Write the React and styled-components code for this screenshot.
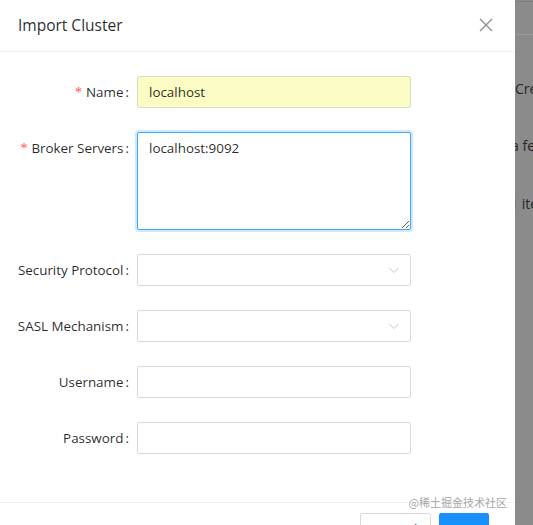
import React from "react";
import styled, { createGlobalStyle } from "styled-components";

const Global = createGlobalStyle`
  html, body { margin: 0; padding: 0; height: 525px; overflow: hidden; background: #fff; }
  body { font-family: "Open Sans", "Noto Sans", "Noto Sans CJK SC", sans-serif; font-size: 13.4px; color: rgba(0,0,0,0.85); }
  * { box-sizing: border-box; }
`;

const Page = styled.div`
  display: flex;
  width: 533px;
  height: 525px;
  overflow: hidden;
`;

const Modal = styled.div`
  position: relative;
  width: 515px;
  flex: none;
  background: #fff;
  display: flex;
  flex-direction: column;
  overflow: hidden;
`;

const Header = styled.div`
  flex: none;
  height: 52px;
  padding: 0 21px 0 18px;
  border-bottom: 1px solid #f0f0f0;
  display: flex;
  align-items: center;
  justify-content: space-between;
`;

const Title = styled.div`
  font-size: 15.5px;
  line-height: 22px;
  margin-top: -2px;
  color: rgba(0,0,0,0.85);
`;

const Close = styled.button`
  border: 0;
  background: none;
  padding: 0;
  width: 16px;
  height: 16px;
  margin-top: -2px;
  display: flex;
  align-items: center;
  justify-content: center;
  color: rgba(0,0,0,0.45);
`;

const Body = styled.div`
  flex: none;
  padding: 24px 0 0;
  height: 450px;
`;

const Row = styled.div`
  display: flex;
  align-items: flex-start;
  margin-bottom: 24px;
`;

const Label = styled.label`
  width: 137px;
  flex: none;
  text-align: right;
  line-height: 32px;
  height: 32px;
  color: rgba(0,0,0,0.85);
  white-space: nowrap;
  &::after {
    content: ":";
    margin: 0 8px 0 2px;
  }
`;

const Star = styled.span`
  color: #ff4d4f;
  font-family: "Liberation Serif", serif;
  font-size: 14px;
  margin-right: 4px;
`;

const Input = styled.input`
  width: 274px;
  height: 32px;
  padding: 4px 11px;
  font: inherit;
  color: rgba(0,0,0,0.85);
  border: 1px solid ${(p) => (p.$autofill ? "#dcdcc4" : "#d9d9d9")};
  background: ${(p) => (p.$autofill ? "#fafcc3" : "#fff")};
  border-radius: 2px;
  outline: none;
`;

const TextArea = styled.textarea`
  width: 274px;
  height: 98px;
  padding: 4px 11px;
  font: inherit;
  line-height: 22px;
  color: rgba(0,0,0,0.85);
  border: 1px solid #40a9ff;
  box-shadow: 0 0 0 2px rgba(24,144,255,0.2);
  border-radius: 2px;
  outline: none;
  resize: vertical;
`;

const Select = styled.div`
  width: 274px;
  height: 32px;
  border: 1px solid #d9d9d9;
  border-radius: 2px;
  background: #fff;
  display: flex;
  align-items: center;
  justify-content: flex-end;
  padding-right: 10px;
  color: #c4c4c4;
`;

const Footer = styled.div`
  flex: none;
  border-top: 1px solid #f0f0f0;
  padding: 10px 26px 10px 16px;
  display: flex;
  justify-content: flex-end;
  gap: 8px;
`;

const Button = styled.button`
  flex: none;
  height: 32px;
  padding: 4px 15px;
  font: inherit;
  border-radius: 2px;
  border: 1px solid ${(p) => (p.$primary ? "#1890ff" : "#d9d9d9")};
  background: ${(p) => (p.$primary ? "#1890ff" : "#fff")};
  color: ${(p) => (p.$primary ? "#fff" : "rgba(0,0,0,0.85)")};
  width: ${(p) => (p.$primary ? "50px" : "71px")};
`;

const Watermark = styled.div`
  position: absolute;
  right: 8px;
  top: 494px;
  font-family: "Noto Sans CJK SC", sans-serif;
  font-size: 11px;
  line-height: 16px;
  color: #a8a8a8;
  pointer-events: none;
`;

const Backdrop = styled.div`
  flex: 1;
  background: #8b8b8b;
  overflow: hidden;
  display: flex;
  flex-direction: column;
`;

const Line = styled.div`
  height: 1px;
  background: ${(p) => p.$c};
  margin-top: ${(p) => p.$top}px;
`;

const Peek = styled.div`
  white-space: nowrap;
  font-size: 14px;
  line-height: 22px;
  color: #262626;
  margin-top: ${(p) => p.$top}px;
  margin-left: ${(p) => p.$left}px;
`;

const Chevron = () => (
  <svg width="12" height="12" viewBox="0 0 12 12" fill="none">
    <path d="M1.5 4 L6 8.5 L10.5 4" stroke="currentColor" strokeWidth="1" />
  </svg>
);

const XIcon = () => (
  <svg width="14" height="14" viewBox="0 0 14 14" fill="none">
    <path d="M1 1 L13 13 M13 1 L1 13" stroke="currentColor" strokeWidth="1.3" />
  </svg>
);

export default function App() {
  return (
    <>
      <Global />
      <Page>
        <Modal>
          <Header>
            <Title>Import Cluster</Title>
            <Close aria-label="close"><XIcon /></Close>
          </Header>
          <Body>
            <Row>
              <Label><Star>*</Star>Name</Label>
              <Input $autofill defaultValue="localhost" />
            </Row>
            <Row>
              <Label><Star>*</Star>Broker Servers</Label>
              <TextArea defaultValue="localhost:9092" />
            </Row>
            <Row>
              <Label>Security Protocol</Label>
              <Select><Chevron /></Select>
            </Row>
            <Row>
              <Label>SASL Mechanism</Label>
              <Select><Chevron /></Select>
            </Row>
            <Row>
              <Label>Username</Label>
              <Input />
            </Row>
            <Row>
              <Label>Password</Label>
              <Input type="password" />
            </Row>
          </Body>
          <Footer>
            <Button>Cancel</Button>
            <Button $primary>OK</Button>
          </Footer>
          <Watermark>@稀土掘金技术社区</Watermark>
        </Modal>
        <Backdrop>
          <Line $c="#7f7f7f" $top={1} />
          <Line $c="#999" $top={32} />
          <Peek $top={43} $left={0}>Create</Peek>
          <Peek $top={35} $left={-4}>a few</Peek>
          <Peek $top={36} $left={-5}>1 item</Peek>
        </Backdrop>
      </Page>
    </>
  );
}
